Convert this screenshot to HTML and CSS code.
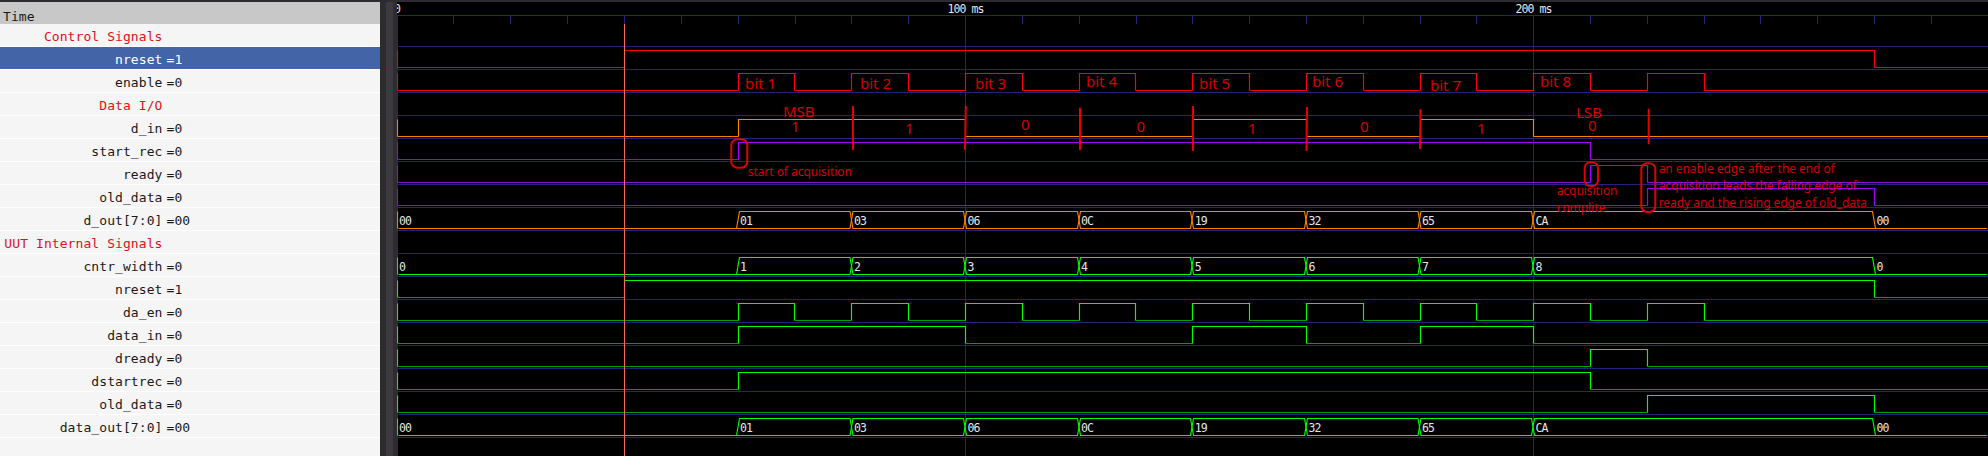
FILE: index.html
```html
<!DOCTYPE html>
<html lang="en">
<head>
  <meta charset="UTF-8">
  <title>Waveform viewer</title>
  <link rel="stylesheet" href="styles.css">
</head>
<body>

  <div class="topstrip"></div>

  <div class="viewer">
    <div class="signals">
      <div class="signals-head">Time</div>
      <div class="row title"><span class="name">Control Signals</span></div>
      <div class="row selected"><span class="name">nreset</span><span class="val">=1</span></div>
      <div class="row"><span class="name">enable</span><span class="val">=0</span></div>
      <div class="row title"><span class="name">Data I/O</span></div>
      <div class="row"><span class="name">d_in</span><span class="val">=0</span></div>
      <div class="row"><span class="name">start_rec</span><span class="val">=0</span></div>
      <div class="row"><span class="name">ready</span><span class="val">=0</span></div>
      <div class="row"><span class="name">old_data</span><span class="val">=0</span></div>
      <div class="row"><span class="name">d_out[7:0]</span><span class="val">=00</span></div>
      <div class="row title"><span class="name">UUT Internal Signals</span></div>
      <div class="row"><span class="name">cntr_width</span><span class="val">=0</span></div>
      <div class="row"><span class="name">nreset</span><span class="val">=1</span></div>
      <div class="row"><span class="name">da_en</span><span class="val">=0</span></div>
      <div class="row"><span class="name">data_in</span><span class="val">=0</span></div>
      <div class="row"><span class="name">dready</span><span class="val">=0</span></div>
      <div class="row"><span class="name">dstartrec</span><span class="val">=0</span></div>
      <div class="row"><span class="name">old_data</span><span class="val">=0</span></div>
      <div class="row"><span class="name">data_out[7:0]</span><span class="val">=00</span></div>
    </div>

    <div class="splitter"></div>

    <!-- viewBox uses page coordinates, time x = 397.5 + 5.68 * ms -->
    <svg class="waves" viewBox="397 2 1591 454">
      <defs>
        <path id="nrst-hi" d="M397.5 4.5V21.5M624.5 21.5V4.5H1874.5V21.5"/>
        <path id="nrst-lo" d="M397.5 21.5H624.5M1874.5 21.5H1988"/>
        <path id="clk-hi" d="M397.5 4.5V21.5M738.5 21.5V4.5H794.5V21.5M851.5 21.5V4.5H908.5V21.5M965.5 21.5V4.5H1022.5V21.5M1079.5 21.5V4.5H1135.5V21.5M1192.5 21.5V4.5H1249.5V21.5M1306.5 21.5V4.5H1363.5V21.5M1420.5 21.5V4.5H1476.5V21.5M1533.5 21.5V4.5H1590.5V21.5M1647.5 21.5V4.5H1704.5V21.5"/>
        <path id="clk-lo" d="M397.5 21.5H738.5M794.5 21.5H851.5M908.5 21.5H965.5M1022.5 21.5H1079.5M1135.5 21.5H1192.5M1249.5 21.5H1306.5M1363.5 21.5H1420.5M1476.5 21.5H1533.5M1590.5 21.5H1647.5M1704.5 21.5H1988"/>
        <path id="din-hi" d="M397.5 4.5V21.5M738.5 21.5V4.5H965.5V21.5M1192.5 21.5V4.5H1306.5V21.5M1420.5 21.5V4.5H1533.5V21.5"/>
        <path id="din-lo" d="M397.5 21.5H738.5M965.5 21.5H1192.5M1306.5 21.5H1420.5M1533.5 21.5H1988"/>
        <path id="start-hi" d="M397.5 4.5V21.5M738.5 21.5V4.5H1590.5V21.5"/>
        <path id="start-lo" d="M397.5 21.5H738.5M1590.5 21.5H1988"/>
        <path id="ready-hi" d="M397.5 4.5V21.5M1590.5 21.5V4.5H1647.5V21.5"/>
        <path id="ready-lo" d="M397.5 21.5H1590.5M1647.5 21.5H1988"/>
        <path id="old-hi" d="M397.5 4.5V21.5M1647.5 21.5V4.5H1874.5V21.5"/>
        <path id="old-lo" d="M397.5 21.5H1647.5M1874.5 21.5H1988"/>
        <path id="bus-a" d="M397.5 4.5V21.5M398.5 21.5H736.5L739.5 4.5H850L853 21.5H963.5L966.5 4.5H1077.5L1080.5 21.5H1190.5L1193.5 4.5H1304.5L1307.5 21.5H1418L1421 4.5H1531.5L1534.5 21.5H1872.5L1875.5 21.5H1987"/>
        <path id="bus-b" d="M736.5 21.5L739.5 21.5H850L853 4.5H963.5L966.5 21.5H1077.5L1080.5 4.5H1190.5L1193.5 21.5H1304.5L1307.5 4.5H1418L1421 21.5H1531.5L1534.5 4.5H1872.5L1875.5 21.5"/>
      </defs>

      <rect class="bg" x="397" y="2" width="1591" height="454"/>

      <!-- time axis -->
      <path class="grid" d="M397 15.5H1988M453.5 15V24M510.5 15V24M567.5 15V24M624.5 15V24M681.5 15V24M738.5 15V24M795.5 15V24M851.5 15V24M908.5 15V24M1022.5 15V24M1079.5 15V24M1136.5 15V24M1192.5 15V24M1249.5 15V24M1306.5 15V24M1363.5 15V24M1420.5 15V24M1476.5 15V24M1590.5 15V24M1647.5 15V24M1704.5 15V24M1760.5 15V24M1817.5 15V24M1874.5 15V24M1931.5 15V24"/>
      <text class="axis" x="394" y="12.5">0</text>
      <text class="axis" x="947.5" y="12.5">100 ms</text>
      <text class="axis" x="1515.5" y="12.5">200 ms</text>

      <!-- row separators and major grid -->
      <path class="grid" d="M397 46.5H1988M397 69.5H1988M397 92.5H1988M397 115.5H1988M397 138.5H1988M397 161.5H1988M397 184.5H1988M397 207.5H1988M397 230.5H1988M397 253.5H1988M397 276.5H1988M397 299.5H1988M397 322.5H1988M397 345.5H1988M397 368.5H1988M397 391.5H1988M397 414.5H1988M397 437.5H1988"/>
      <path class="grid" d="M397.5 15V456M965.5 15V456M1533.5 15V456"/>

      <g class="red" transform="translate(0 46)"><use class="hi" href="#nrst-hi"/><use class="lo" href="#nrst-lo"/></g>
      <g class="red" transform="translate(0 69)"><use class="hi" href="#clk-hi"/><use class="lo" href="#clk-lo"/></g>
      <g class="orange" transform="translate(0 115)"><use class="hi" href="#din-hi"/><use class="lo" href="#din-lo"/></g>
      <g class="purple" transform="translate(0 138)"><use class="hi" href="#start-hi"/><use class="lo" href="#start-lo"/></g>
      <g class="purple" transform="translate(0 161)"><use class="hi" href="#ready-hi"/><use class="lo" href="#ready-lo"/></g>
      <g class="purple" transform="translate(0 184)"><use class="hi" href="#old-hi"/><use class="lo" href="#old-lo"/></g>
      <g class="orange" transform="translate(0 207)">
        <use class="hi" href="#bus-a"/><use class="hi" href="#bus-b"/>
        <text class="value" x="399" y="18.3">00</text>
        <text class="value" x="740" y="18.3">01</text>
        <text class="value" x="854" y="18.3">03</text>
        <text class="value" x="967.5" y="18.3">06</text>
        <text class="value" x="1081" y="18.3">0C</text>
        <text class="value" x="1194.8" y="18.3">19</text>
        <text class="value" x="1308.4" y="18.3">32</text>
        <text class="value" x="1422" y="18.3">65</text>
        <text class="value" x="1535.6" y="18.3">CA</text>
        <text class="value" x="1876.4" y="18.3">00</text>
      </g>
      <g class="green" transform="translate(0 253)">
        <use class="hi" href="#bus-a"/><use class="hi" href="#bus-b"/>
        <text class="value" x="399" y="18.3">0</text>
        <text class="value" x="740" y="18.3">1</text>
        <text class="value" x="854" y="18.3">2</text>
        <text class="value" x="967.5" y="18.3">3</text>
        <text class="value" x="1081" y="18.3">4</text>
        <text class="value" x="1194.8" y="18.3">5</text>
        <text class="value" x="1308.4" y="18.3">6</text>
        <text class="value" x="1422" y="18.3">7</text>
        <text class="value" x="1535.6" y="18.3">8</text>
        <text class="value" x="1876.4" y="18.3">0</text>
      </g>
      <g class="green" transform="translate(0 276)"><use class="hi" href="#nrst-hi"/><use class="lo" href="#nrst-lo"/></g>
      <g class="green" transform="translate(0 299)"><use class="hi" href="#clk-hi"/><use class="lo" href="#clk-lo"/></g>
      <g class="green" transform="translate(0 322)"><use class="hi" href="#din-hi"/><use class="lo" href="#din-lo"/></g>
      <g class="green" transform="translate(0 345)"><use class="hi" href="#ready-hi"/><use class="lo" href="#ready-lo"/></g>
      <g class="green" transform="translate(0 368)"><use class="hi" href="#start-hi"/><use class="lo" href="#start-lo"/></g>
      <g class="green" transform="translate(0 391)"><use class="hi" href="#old-hi"/><use class="lo" href="#old-lo"/></g>
      <g class="green" transform="translate(0 414)">
        <use class="hi" href="#bus-a"/><use class="hi" href="#bus-b"/>
        <text class="value" x="399" y="18.3">00</text>
        <text class="value" x="740" y="18.3">01</text>
        <text class="value" x="854" y="18.3">03</text>
        <text class="value" x="967.5" y="18.3">06</text>
        <text class="value" x="1081" y="18.3">0C</text>
        <text class="value" x="1194.8" y="18.3">19</text>
        <text class="value" x="1308.4" y="18.3">32</text>
        <text class="value" x="1422" y="18.3">65</text>
        <text class="value" x="1535.6" y="18.3">CA</text>
        <text class="value" x="1876.4" y="18.3">00</text>
      </g>

      <!-- cursor -->
      <path class="cursor" d="M624.5 24V456"/>

      <!-- hand annotations -->
      <g class="note">
        <text x="745" y="89">bit 1</text>
        <text x="860" y="89">bit 2</text>
        <text x="975" y="89">bit 3</text>
        <text x="1086" y="87">bit 4</text>
        <text x="1199" y="89">bit 5</text>
        <text x="1312" y="87">bit 6</text>
        <text x="1430" y="91">bit 7</text>
        <text x="1540" y="87">bit 8</text>
        <text x="783" y="117.3">MSB</text>
        <text x="1576" y="117.7">LSB</text>
        <text x="791" y="132">1</text>
        <text x="905" y="133.7">1</text>
        <text x="1021" y="130">0</text>
        <text x="1136.5" y="132">0</text>
        <text x="1248" y="133.7">1</text>
        <text x="1360" y="132">0</text>
        <text x="1477" y="133.7">1</text>
        <text x="1588" y="131">0</text>
        <g class="small">
          <text x="747.7" y="175.7">start of acquisition</text>
          <text x="1556.7" y="194.7">acquisition</text>
          <text x="1556.7" y="211.7">complite</text>
          <text x="1658.7" y="173.3">an enable edge after the end of</text>
          <text x="1658.7" y="190">acquisition leads the falling edge of</text>
          <text x="1658.7" y="206.7">ready and the rising edge of old_data</text>
        </g>
      </g>
      <path class="bar" d="M853 106V150M965.8 106L965 150M1080 107.7V150M1193 106V151M1307 107L1306.5 151M1420.5 109L1420 149M1648.7 108.7V144.3"/>
      <rect class="ring" x="731.3" y="139.3" width="16" height="28.4" rx="6"/>
      <rect class="ring" x="1584.7" y="162.3" width="13.3" height="23.7" rx="5.5"/>
      <rect class="ring" x="1641.3" y="163.3" width="14" height="48.7" rx="6"/>
    </svg>
  </div>

</body>
</html>
```

FILE: styles.css
```css
html, body {
  margin: 0;
  height: 100%;
  overflow: hidden;
  background-color: #2c2c30;
}
.topstrip {
  height: 2px;
  background-color: #2c2c30;
}
.viewer {
  display: flex;
  height: 454px;
}
.signals {
  width: 380px;
  flex: none;
  background-color: #f5f5f5;
  font-family: "DejaVu Sans Mono", monospace;
  font-size: 13px;
  letter-spacing: 0.08px;
  color: #1a1a1a;
}
.signals-head {
  height: 18px;
  padding: 4px 0 0 3px;
  line-height: 22px;
  background-color: #c8c8c8;
}
.row {
  display: flex;
  height: 20px;
  padding-top: 2px;
  line-height: 22px;
  border-bottom: 1px solid #ffffff;
}
.name {
  width: 162.5px;
  text-align: right;
  white-space: nowrap;
}
.val {
  margin-left: 4px;
}
.title {
  color: #e01020;
}
.selected {
  background-color: #4464a8;
  color: #ffffff;
}
.splitter {
  width: 17px;
  flex: none;
  background: linear-gradient(90deg, #2c2c2e 0 6px, #3c3a3e 6px 13px, #2e2c30 13px);
}
.waves {
  width: 1591px;
  height: 454px;
  display: block;
}
.bg {
  fill: #000000;
}
.grid {
  fill: none;
  stroke: #24247e;
  stroke-width: 1;
}
.axis, .value {
  font-family: "DejaVu Sans Mono", monospace;
  font-size: 11.5px;
  letter-spacing: -0.9px;
  fill: #e6e6e6;
}
.hi {
  fill: none;
  stroke-width: 1.15;
}
.lo {
  fill: none;
  stroke-width: 1;
}
.red { stroke: #ff0000; }
.orange { stroke: #ff8000; }
.purple { stroke: #a000ff; }
.purple .lo { stroke: #8a10d8; }
.green { stroke: #00ff00; }
.green .lo { stroke: #00a000; }
.value { stroke: none; }
.cursor {
  stroke: #f46a5c;
  stroke-width: 1;
}
.note {
  font-family: "Noto Sans", sans-serif;
  font-size: 15px;
  fill: #d40000;
}
.small {
  font-size: 11.9px;
}
.bar {
  stroke: #e60000;
  stroke-width: 2;
}
.ring {
  fill: none;
  stroke: #e00000;
  stroke-width: 2;
}
```
